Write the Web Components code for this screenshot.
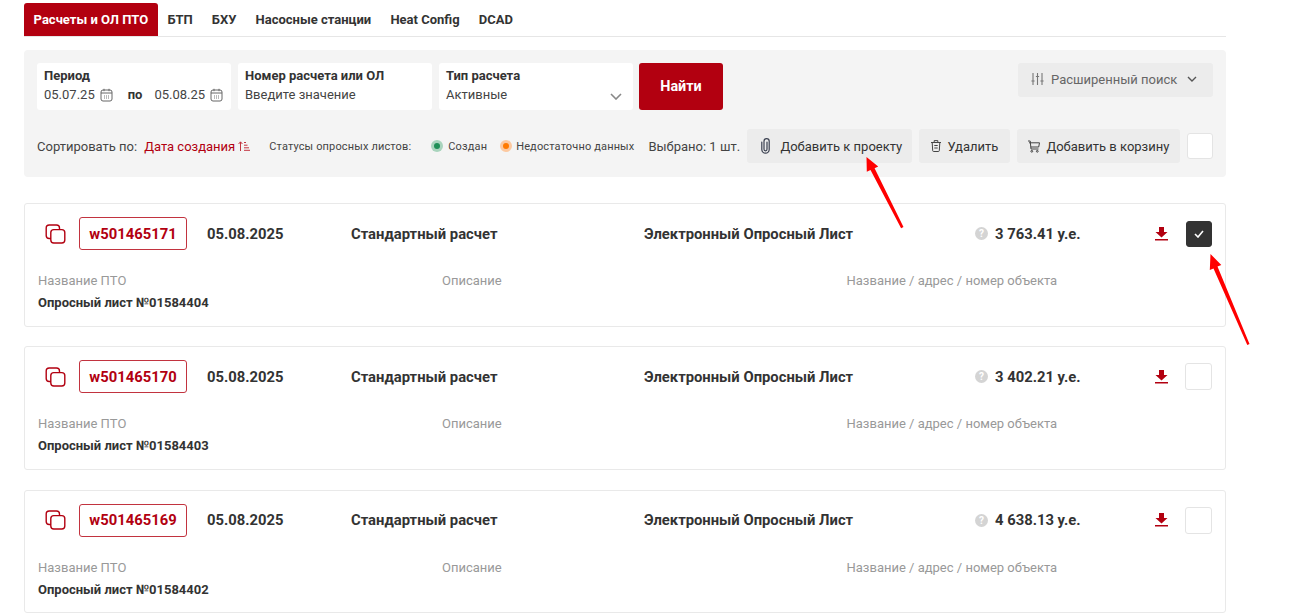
<!DOCTYPE html>
<html lang="ru"><head><meta charset="utf-8"><title>Расчеты</title>
<style>
html,body{margin:0;background:#fff;overflow:hidden}
body{font-family:Roboto,"Liberation Sans",sans-serif;color:#333;width:1299px;height:614px;position:relative}
app-page{display:block}
</style></head><body>
<app-page>
  <tab-bar>
    <tab-item active>Расчеты и ОЛ ПТО</tab-item><tab-item>БТП</tab-item><tab-item>БХУ</tab-item><tab-item>Насосные станции</tab-item><tab-item>Heat Config</tab-item><tab-item>DCAD</tab-item>
  </tab-bar>
  <filter-panel>
    <field-box slot="f" label="Период">
      <span class="d">05.07.25</span><cal-icon></cal-icon><b style="font-weight:700;margin:0 12px 0 15px;color:#333;font-size:13px">по</b><span class="d">05.08.25</span><cal-icon></cal-icon>
    </field-box>
    <field-box slot="f" label="Номер расчета или ОЛ">Введите значение</field-box>
    <field-box slot="f" label="Тип расчета" select>Активные</field-box>
    <search-btn slot="f">Найти</search-btn>
    <adv-btn slot="adv">Расширенный поиск</adv-btn>
    <sort-label slot="r"></sort-label>
    <status-legend slot="r"></status-legend>
    <span slot="r" style="font-size:13px;color:#444;margin-left:14px;white-space:nowrap;width:99px;flex:none">Выбрано: 1 шт.</span>
    <act-btn slot="r" icon="clip" style="width:165px" pad="14" gap="10">Добавить к проекту</act-btn>
    <act-btn slot="r" icon="trash" style="margin-left:7px;width:91px" pad="12" gap="6">Удалить</act-btn>
    <act-btn slot="r" icon="cart" style="margin-left:7px;width:163px" pad="11" gap="6">Добавить в корзину</act-btn>
    <check-box slot="r" style="margin-left:7px"></check-box>
  </filter-panel>
  <calc-card num="w501465171" price="3 763.41 у.е." ol="Опросный лист №01584404" checked></calc-card>
  <calc-card num="w501465170" price="3 402.21 у.е." ol="Опросный лист №01584403"></calc-card>
  <calc-card num="w501465169" price="4 638.13 у.е." ol="Опросный лист №01584402"></calc-card>
</app-page>
<red-arrows></red-arrows>
<script>
const def=(name,html)=>{customElements.define(name,class extends HTMLElement{
  connectedCallback(){ if(this.shadowRoot) return; const s=this.attachShadow({mode:'open'});
    s.innerHTML=typeof html==='function'?html(this):html; }
});};
const ICON={
 clip:'<svg width="9" height="16" viewBox="0 0 9 16" fill="none" stroke="#3a4050" stroke-width="1.2" stroke-linecap="round"><path d="M.8 4v7.500a3.700 3.700 0 0 0 7.400 0V3.300a2.600 2.600 0 0 0-5.200 0v8a1.500 1.500 0 0 0 3 0V4"/></svg>',
 trash:'<svg width="10" height="12" viewBox="0 0 10 12" fill="none" stroke="#444" stroke-width="1"><path d="M0 2.500h10M3.200 2.300V.6h3.600v1.700M1.200 2.500l.5 8.200c0 .5.400.8.900.8h4.800c.5 0 .9-.3.900-.8l.5-8.200M3.300 5.500h3.400M3.300 8h3.400"/></svg>',
 cart:'<svg width="12" height="13" viewBox="0 0 12 13" fill="none" stroke="#444" stroke-width="1"><path d="M0 1h2.200l.8 8h7.500M1 2.800h10.500l-.8 4.200H2.700"/><circle cx="3.800" cy="11.300" r=".9"/><circle cx="9.300" cy="11.300" r=".9"/></svg>'
};
def('tab-bar',`<style>:host{display:flex;width:1202px;margin:3px 0 0 24px;height:34px;box-sizing:border-box;border-bottom:1px solid #e6e6e6}</style><slot></slot>`);
def('tab-item',el=>`<style>:host{display:block;height:33px;line-height:33px;font-size:13px;font-weight:700;padding:0 9.6px;color:${el.hasAttribute('active')?'#fff':'#333'};background:${el.hasAttribute('active')?'#b20010':'transparent'};border-radius:3px 3px 0 0;white-space:nowrap}</style><slot></slot>`);
def('filter-panel',`<style>
:host{display:block;width:1202px;height:127px;margin:13px 0 0 24px;background:#f4f4f4;border-radius:4px;box-sizing:border-box;padding:13px 13px 0}
.top{display:flex;justify-content:space-between;height:47px}
.fl{display:flex;gap:7px}
.fl ::slotted(search-btn){margin-left:-1px}
.r{display:flex;align-items:center;margin-top:19px;height:34px}
</style><div class="top"><div class="fl"><slot name="f"></slot></div><slot name="adv"></slot></div><div class="r"><slot name="r"></slot></div>`);
def('field-box',el=>`<style>
:host{display:block;width:194px;height:47px;background:#fff;border-radius:3px;box-sizing:border-box;padding:5px 7px 0;position:relative}
.l{font-size:13px;font-weight:700;line-height:16px;color:#333;white-space:nowrap}
.v{display:flex;align-items:center;font-size:13px;line-height:20px;margin-top:1px;color:#444;white-space:nowrap}
svg{position:absolute;right:11px;top:30px}
</style><div class="l">${el.getAttribute('label')}</div><div class="v"><slot></slot></div>${el.hasAttribute('select')?'<svg width="12" height="7" viewBox="0 0 12 7" fill="none" stroke="#888" stroke-width="1.6"><path d="M1 1l5 5 5-5"/></svg>':''}`);
def('cal-icon',`<style>:host{display:inline-flex;margin-left:5px}</style><svg width="13" height="14" viewBox="0 0 13 14" fill="none" stroke="#666" stroke-width="1"><rect x="1" y="2" width="11" height="11" rx="2"/><path d="M1 5h11M4 .8v2.400M9 .8v2.400"/><path d="M4 8h1M6 8h1M8 8h1M4 10h1M6 10h1M8 10h1" stroke-width=".9"/></svg>`);
def('search-btn',`<style>:host{display:flex;align-items:center;justify-content:center;width:84px;height:47px;background:#b20010;color:#fff;border-radius:3px;font-size:14.4px;font-weight:700}</style><slot></slot>`);
def('adv-btn',`<style>:host{display:flex;align-items:center;width:195px;height:34px;background:#ececec;border-radius:3px;box-sizing:border-box;padding:0 0 2px 13px;font-size:13px;color:#666;white-space:nowrap}
svg{flex:none} .a{margin-right:7px} .b{margin-left:10px}</style><svg class="a" width="13" height="12" viewBox="0 0 13 12" fill="none" stroke="#777" stroke-width="1.1"><path d="M2 0v12M6.500 0v12M11 0v12M.4 8h3.200M4.900 3.500h3.200M9.400 8h3.200"/></svg><slot></slot><svg class="b" width="10" height="6" viewBox="0 0 10 6" fill="none" stroke="#555" stroke-width="1.4"><path d="M1 1l4 4 4-4"/></svg>`);
def('sort-label',`<style>:host{display:flex;align-items:center;font-size:13px;color:#444;white-space:nowrap}
.d{color:#b20010;margin-left:7px}svg{margin-left:3px}</style>Сортировать по:<span class="d">Дата создания</span><svg width="12" height="10" viewBox="0 0 12 10" fill="none" stroke="#c2333f" stroke-width="1"><path d="M2.500 10V1M.6 3L2.500 .8 4.400 3M6 1.500h2M6 4.200h3.500M6 6.800h5M6 9.300h6"/></svg>`);
def('status-legend',`<style>:host{display:flex;align-items:center;font-size:11px;color:#444;white-space:nowrap;margin-left:19px;letter-spacing:.15px}
i{display:inline-block;width:6px;height:6px;border-radius:50%;margin:0 8px 0 0}
.g{background:#1f8f57;box-shadow:0 0 0 3px #a9d4bd}.o{background:#ff7a00;box-shadow:0 0 0 3px #fcc9a0}
.s{display:flex;align-items:center}</style><span style="margin-right:23px">Статусы опросных листов:</span><span class="s" style="margin-right:16px"><i class="g"></i>Создан</span><span class="s"><i class="o" style="margin-right:7px"></i>Недостаточно данных</span>`);
def('act-btn',el=>`<style>:host{display:flex;align-items:center;height:34px;box-sizing:border-box;background:#ececec;border-radius:3px;padding-left:${el.getAttribute('pad')}px;font-size:13px;color:#333;white-space:nowrap;flex:none}
span{display:inline-flex;margin-right:${el.getAttribute('gap')}px}</style><span>${ICON[el.getAttribute('icon')]}</span><slot></slot>`);
def('check-box',el=>`<style>:host{display:flex;align-items:center;justify-content:center;width:26px;height:26px;box-sizing:border-box;border:1px solid #e4e4e4;border-radius:3px;background:#fff;flex:none}
:host([checked]){background:#333;border-color:#333}</style>${el.hasAttribute('checked')?'<svg width="10" height="8" viewBox="0 0 10 8" fill="none" stroke="#fff" stroke-width="1.6"><path d="M1 4l3 3 5-6"/></svg>':''}`);
def('calc-card',el=>`<style>
:host{display:block;width:1202px;height:123.5px;box-sizing:border-box;border:1px solid #e9e9e9;border-radius:3px;margin:19.8px 0 0 24px;background:#fff;padding:13px 13px 0 13px}
:host(:first-of-type){margin-top:26px}
.top{display:grid;grid-template-columns:34px 128px 144px 293px 331px 180px 31px 26px;align-items:center;height:33px;white-space:nowrap;font-size:14.8px;font-weight:700;color:#333;margin-left:7px}
.copy{display:flex}
.chip{box-sizing:border-box;width:108px;height:33px;border:1px solid #c2333f;border-radius:3px;color:#b20010;display:flex;align-items:center;justify-content:center;font-size:14.8px}
.price{display:flex;align-items:center;gap:7px}
.q{width:13px;height:13px;border-radius:50%;background:#d4d4d4;color:#fff;font-size:10px;line-height:13px;text-align:center;flex:none}
.dl{display:flex}
.grid{display:grid;grid-template-columns:404px 404.5px 1fr;margin-top:21px;font-size:13px;color:#999;line-height:20px}
.ol{font-size:13px;font-weight:700;color:#333;line-height:16px;margin-top:4px}
check-box:not([checked]){width:27px;height:27px;margin-left:-1px}
</style>
<div class="top">
<span class="copy"><svg width="21" height="20" viewBox="0 0 21 20" fill="none" stroke="#b20010" stroke-width="1.4" stroke-linejoin="round"><path d="M6 14.500H4.200A3 3 0 0 1 1.200 11.500V4A3 3 0 0 1 4.200 1h7.300a3 3 0 0 1 3 3v1.600"/><rect x="5.800" y="5.600" width="14" height="13.400" rx="3"/></svg></span>
<span class="chip">${el.getAttribute('num')}</span>
<span>05.08.2025</span><span>Стандартный расчет</span><span>Электронный Опросный Лист</span>
<span class="price"><span class="q">?</span>${el.getAttribute('price')}</span>
<span class="dl"><svg width="13" height="14" viewBox="0 0 13 14" fill="#b20010"><path d="M4 0h5v5h3.500L6.500 10.500.5 5H4z"/><rect x="0" y="12" width="13" height="1.500"/></svg></span>
<check-box ${el.hasAttribute('checked')?'checked':''}></check-box>
</div>
<div class="grid"><span>Название ПТО</span><span>Описание</span><span>Название / адрес / номер объекта</span></div>
<div class="ol">${el.getAttribute('ol')}</div>`);
def('red-arrows',`<style>:host{position:absolute;left:0;top:0;width:1299px;height:614px;pointer-events:none}</style><svg width="1299" height="614" fill="#f00"><path d="M903.500 227l-2.400 1.200L870.500 170l-3.700 1.800L866.500 157l11.700 9.500-3.600 1.700zM1249.500 344l-2.200 1L1213.500 268.500l-3.700 1.600L1210.500 254l10.800 11-3.800 1.600z"/></svg>`);
</script>
</body></html>
